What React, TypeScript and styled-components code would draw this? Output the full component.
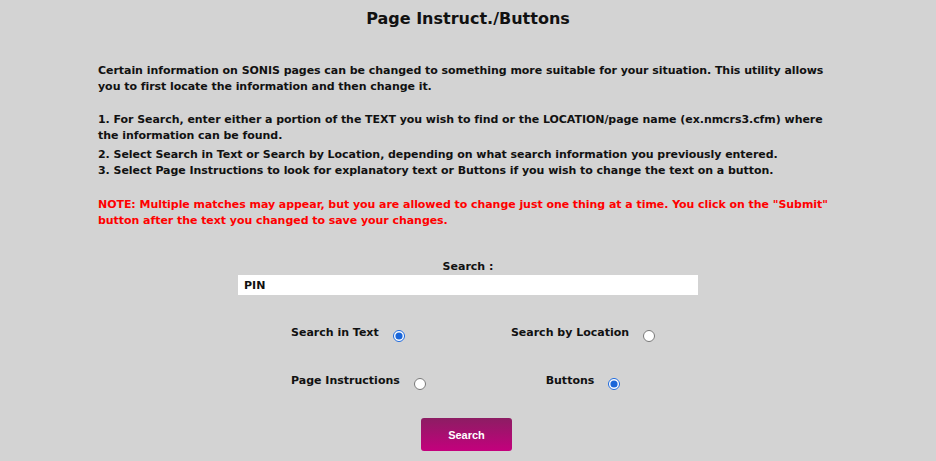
import React, { useState } from 'react';
import styled, { createGlobalStyle } from 'styled-components';

const GlobalStyle = createGlobalStyle`
    html, body {
        margin: 0;
        padding: 0;
        background: #d3d3d3;
    }
    body {
        font-family: 'DejaVu Sans', 'Liberation Sans', sans-serif;
        color: #111;
    }
`;

const Page = styled.div`
    width: 936px;
    min-height: 461px;
    display: flex;
    flex-direction: column;
    align-items: center;
    padding-top: 9px;
    box-sizing: border-box;
`;

const Title = styled.h1`
    margin: 0;
    font-size: 16px;
    font-weight: bold;
    line-height: 20px;
    color: #111;
`;

const Content = styled.div`
    width: 740px;
    margin-top: 34px;
    font-size: 11px;
    font-weight: bold;
    line-height: 16px;
    letter-spacing: -0.05px;
`;

const Para = styled.p<{ $gap?: number; $red?: boolean }>`
    margin: 0;
    margin-top: ${(p) => p.$gap || 0}px;
    color: ${(p) => (p.$red ? '#ff0000' : '#111')};
`;

const Step = styled.div<{ $after?: number }>`
    margin-bottom: ${(p) => p.$after || 0}px;
`;

const SearchBlock = styled.div`
    margin-top: 30px;
    display: flex;
    flex-direction: column;
    align-items: center;
`;

const Label = styled.label`
    font-size: 11px;
    font-weight: bold;
    line-height: 16px;
`;

const TextInput = styled.input`
    width: 460px;
    height: 20px;
    box-sizing: border-box;
    border: none;
    outline: none;
    background: #fff;
    padding: 0 6px;
    font-family: 'DejaVu Sans', sans-serif;
    font-size: 11px;
    font-weight: bold;
    color: #111;
`;

const Options = styled.div`
    display: grid;
    grid-template-columns: 200px 184px;
    row-gap: 28px;
    margin-top: 28px;
    margin-left: 30px;
`;

const Option = styled.label<{ $center?: boolean }>`
    display: flex;
    align-items: center;
    justify-content: ${(p) => (p.$center ? 'center' : 'flex-start')};
    font-size: 11px;
    font-weight: bold;
    line-height: 20px;
    cursor: pointer;
`;

const Radio = styled.input`
    margin: 5px 0 0 14px;
    width: 12px;
    height: 12px;
    accent-color: #1a66d9;
`;

const SubmitButton = styled.button`
    margin-top: 27px;
    margin-left: -3px;
    width: 91px;
    height: 33px;
    border: none;
    border-radius: 3px;
    background: linear-gradient(to bottom, #8c1d63, #c4007d);
    color: #fff;
    font-family: 'Liberation Sans', Arial, sans-serif;
    font-size: 11px;
    font-weight: bold;
    cursor: pointer;
`;

export default function App() {
    const [query, setQuery] = useState('PIN');
    const [mode, setMode] = useState('text');
    const [kind, setKind] = useState('buttons');

    return (
        <>
            <GlobalStyle />
            <Page>
                <Title>Page Instruct./Buttons</Title>
                <Content>
                    <Para>
                        Certain information on SONIS pages can be changed to something more suitable for your situation. This utility allows you to first
                        locate the information and then change it.
                    </Para>
                    <Para $gap={17}>
                        <Step $after={3}>1. For Search, enter either a portion of the TEXT you wish to find or the LOCATION/page name (ex.nmcrs3.cfm) where the information can be found.</Step>
                        <Step>2. Select Search in Text or Search by Location, depending on what search information you previously entered.</Step>
                        <Step>3. Select Page Instructions to look for explanatory text or Buttons if you wish to change the text on a button.</Step>
                    </Para>
                    <Para $gap={18} $red>
                        NOTE: Multiple matches may appear, but you are allowed to change just one thing at a time. You click on the "Submit" button after the
                        text you changed to save your changes.
                    </Para>
                </Content>
                <SearchBlock>
                    <Label htmlFor="search">Search :</Label>
                    <TextInput id="search" value={query} onChange={(e) => setQuery(e.target.value)} />
                    <Options>
                        <Option>
                            Search in Text
                            <Radio type="radio" name="mode" checked={mode === 'text'} onChange={() => setMode('text')} />
                        </Option>
                        <Option $center>
                            Search by Location
                            <Radio type="radio" name="mode" checked={mode === 'location'} onChange={() => setMode('location')} />
                        </Option>
                        <Option>
                            Page Instructions
                            <Radio type="radio" name="kind" checked={kind === 'page'} onChange={() => setKind('page')} />
                        </Option>
                        <Option $center>
                            Buttons
                            <Radio type="radio" name="kind" checked={kind === 'buttons'} onChange={() => setKind('buttons')} />
                        </Option>
                    </Options>
                    <SubmitButton>Search</SubmitButton>
                </SearchBlock>
            </Page>
        </>
    );
}
